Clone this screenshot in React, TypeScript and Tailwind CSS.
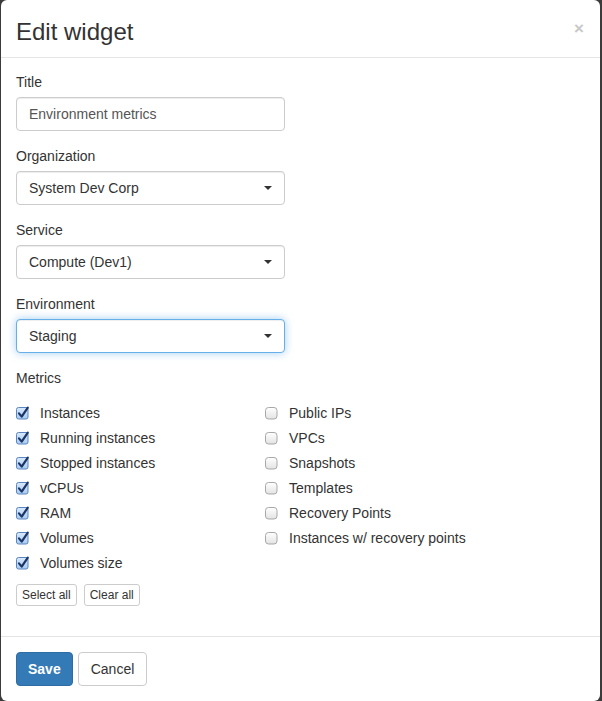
const left = ['Instances', 'Running instances', 'Stopped instances', 'vCPUs', 'RAM', 'Volumes', 'Volumes size'];
const right = ['Public IPs', 'VPCs', 'Snapshots', 'Templates', 'Recovery Points', 'Instances w/ recovery points'];

function Box({ checked }: { checked: boolean }) {
  if (checked) {
    return (
      <svg width="14" height="14" viewBox="0 0 14 14" className="shrink-0">
        <defs>
          <linearGradient id="cb" x1="0" y1="0" x2="0" y2="1">
            <stop offset="0" stopColor="#d9e9fb" />
            <stop offset="1" stopColor="#a9cbf1" />
          </linearGradient>
        </defs>
        <rect x="0.5" y="1.5" width="11.5" height="11.5" rx="2" fill="url(#cb)" stroke="#5a86c0" />
        <path d="M3 7.4 L5.7 10.6 L11.8 1.6" fill="none" stroke="#1b3566" strokeWidth="2.2" strokeLinecap="round" strokeLinejoin="round" />
      </svg>
    );
  }
  return (
    <svg width="14" height="14" viewBox="0 0 14 14" className="shrink-0">
      <defs>
        <linearGradient id="ub" x1="0" y1="0" x2="0" y2="1">
          <stop offset="0" stopColor="#ffffff" />
          <stop offset="1" stopColor="#e3e3e3" />
        </linearGradient>
      </defs>
      <rect x="0.5" y="1.5" width="11.5" height="11.5" rx="3" fill="url(#ub)" stroke="#a8a8a8" />
    </svg>
  );
}

function Select({ value, focus }: { value: string; focus?: boolean }) {
  return (
    <div
      className={
        'flex h-[34px] w-[269px] items-center justify-between rounded-[4px] border bg-white pl-3 pr-[12px] text-[14px] text-[#333] ' +
        (focus
          ? 'border-[#66afe9] shadow-[inset_0_1px_1px_rgba(0,0,0,0.075),0_0_8px_rgba(102,175,233,0.6)]'
          : 'border-[#ccc] shadow-[inset_0_1px_1px_rgba(0,0,0,0.075)]')
      }
    >
      <span>{value}</span>
      <span className="h-0 w-0 border-x-[4px] border-t-[4px] border-x-transparent border-t-[#333]" />
    </div>
  );
}

function Field({ label, children }: { label: string; children: React.ReactNode }) {
  return (
    <div className="mb-[15px]">
      <div className="mb-[5px] h-5 text-[14px] leading-5 text-[#333]">{label}</div>
      {children}
    </div>
  );
}

export default function App() {
  return (
    <div className="h-[701px] w-[602px] bg-[#3b3b3b]" style={{ fontFamily: '"Liberation Sans", Arial, sans-serif' }}>
      <div className="ml-px flex h-[701px] w-[599px] flex-col rounded-[6px] bg-white">
        <div className="flex h-[58px] items-center justify-between border-b border-[#e5e5e5] pl-[15px] pr-4">
          <h4 className="mt-[6px] text-[24px] leading-none text-[#333]">Edit widget</h4>
          <span className="text-[17px] font-bold text-[#c8c8c8]">×</span>
        </div>

        <div className="flex-1 px-[15px] pt-[14px]">
          <Field label="Title">
            <div className="flex h-[34px] w-[269px] items-center rounded-[4px] border border-[#ccc] px-3 text-[14px] text-[#555] shadow-[inset_0_1px_1px_rgba(0,0,0,0.075)]">
              Environment metrics
            </div>
          </Field>
          <Field label="Organization">
            <Select value="System Dev Corp" />
          </Field>
          <Field label="Service">
            <Select value="Compute (Dev1)" />
          </Field>
          <Field label="Environment">
            <Select value="Staging" focus />
          </Field>

          <div className="h-5 text-[14px] leading-5 text-[#333]">Metrics</div>
          <div className="mt-[15px] grid grid-cols-[249px_1fr]">
            <div className="flex flex-col gap-[5px]">
              {left.map((m) => (
                <div key={m} className="flex h-5 items-center gap-[10px] text-[14px] text-[#333]">
                  <Box checked />
                  <span>{m}</span>
                </div>
              ))}
            </div>
            <div className="flex flex-col gap-[5px]">
              {right.map((m) => (
                <div key={m} className="flex h-5 items-center gap-[10px] text-[14px] text-[#333]">
                  <Box checked={false} />
                  <span>{m}</span>
                </div>
              ))}
            </div>
          </div>
          <div className="mt-[11px] flex gap-[7px]">
            <button className="h-[22px] rounded-[3px] border border-[#ccc] bg-white px-[5px] text-[12px] text-[#333]">Select all</button>
            <button className="h-[22px] rounded-[3px] border border-[#ccc] bg-white px-[5px] text-[12px] text-[#333]">Clear all</button>
          </div>
        </div>

        <div className="flex h-[65px] items-center gap-[5px] border-t border-[#e5e5e5] px-[15px]">
          <button className="h-[34px] rounded-[4px] border border-[#2e6da4] bg-[#337ab7] px-[11px] text-[14px] font-bold text-white">Save</button>
          <button className="h-[34px] rounded-[4px] border border-[#ccc] bg-white px-3 text-[14px] text-[#333]">Cancel</button>
        </div>
      </div>
    </div>
  );
}
